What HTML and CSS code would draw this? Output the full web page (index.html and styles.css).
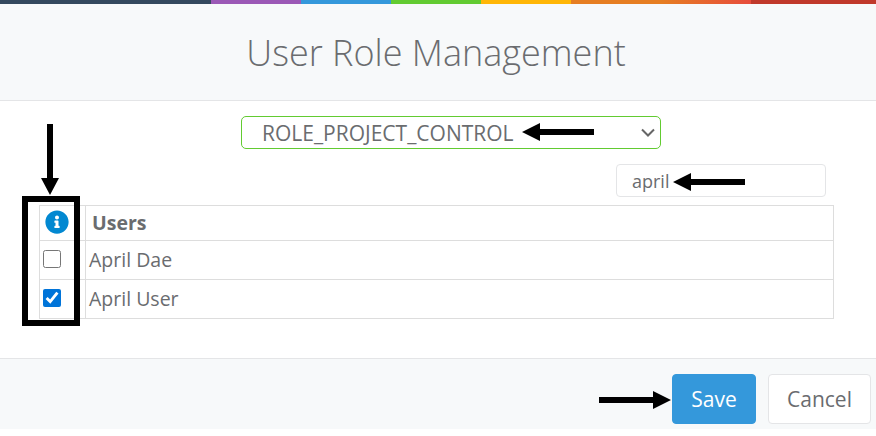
FILE: index.html
```html
<!DOCTYPE html>
<html lang="en">
<head>
  <meta charset="UTF-8">
  <meta name="viewport" content="width=device-width, initial-scale=1.0">
  <title>User Role Management</title>
  <link rel="stylesheet" href="styles.css">
</head>
<body>
  <div class="color-line"></div>

  <header class="modal-header">
    <h1>User Role Management</h1>
  </header>

  <div class="modal-body">
    <div class="role-row">
      <select class="role-select">
        <option>ROLE_PROJECT_CONTROL</option>
      </select>
      <svg class="select-chevron" viewBox="0 0 14 10">
        <path d="M1 1.5l6 6 6-6"/>
      </svg>
    </div>

    <div class="search-row">
      <input class="search-input" type="text" value="april">
    </div>

    <table class="users-table">
      <thead>
        <tr>
          <th class="col-check">
            <svg class="info-icon" viewBox="0 0 512 512">
              <path d="M256 8C119.043 8 8 119.083 8 256c0 136.997 111.043 248 248 248s248-111.003 248-248C504 119.083 392.957 8 256 8zm0 110c23.196 0 42 18.804 42 42s-18.804 42-42 42-42-18.804-42-42 18.804-42 42-42zm56 254c0 6.627-5.373 12-12 12h-88c-6.627 0-12-5.373-12-12v-24c0-6.627 5.373-12 12-12h12v-64h-12c-6.627 0-12-5.373-12-12v-24c0-6.627 5.373-12 12-12h64c6.627 0 12 5.373 12 12v100h12c6.627 0 12 5.373 12 12v24z"/>
            </svg>
          </th>
          <th class="col-name">Users</th>
        </tr>
      </thead>
      <tbody>
        <tr class="row-first">
          <td class="col-check"><input type="checkbox"></td>
          <td>April Dae</td>
        </tr>
        <tr class="row-second">
          <td class="col-check"><input type="checkbox" checked></td>
          <td>April User</td>
        </tr>
      </tbody>
    </table>
  </div>

  <footer class="modal-footer">
    <button class="btn btn-save">Save</button>
    <button class="btn btn-cancel">Cancel</button>
  </footer>

  <!-- annotations drawn over the screenshot -->
  <div class="highlight-box"></div>
  <svg class="arrows" width="876" height="436" viewBox="0 0 876 436">
    <path d="M47 124h6v54h6l-9 17-9-17h6z"/>
    <path d="M522 132l18-9v6h54v6h-54v6z"/>
    <path d="M673 182l18-9v6h54v6h-54v6z"/>
    <path d="M671 400l-18 9v-6h-54v-6h54v-6z"/>
  </svg>
</body>
</html>
```

FILE: styles.css
```css
body {
  font-family: 'Open Sans', sans-serif;
  margin: 0;
  padding: 0;
  height: 436px;
  overflow: hidden;
  position: relative;
  background-color: white;
  color: #6a6c6f;
}
.color-line {
  height: 4px;
  background-image: linear-gradient(to right,
    #34495e 0, #34495e 211px,
    #9b59b6 211px, #9b59b6 301px,
    #3498db 301px, #3498db 391px,
    #62cb31 391px, #62cb31 481px,
    #ffb606 481px, #ffb606 571px,
    #e67e22 571px, #e67e22 661px,
    #e74c3c 751px, #c0392b 751px, #c0392b 100%);
}
.modal-header {
  background-color: #f7f9fa;
  border-bottom: 1px solid #e4e5e7;
  height: 97px;
  box-sizing: border-box;
  padding-right: 4px;
  display: flex;
  align-items: center;
  justify-content: center;
}
.modal-header h1 {
  margin: 0;
  font-size: 36px;
  font-weight: 300;
}
.modal-body {
  height: 257px;
  box-sizing: border-box;
  padding: 15px 42px 0 39px;
}
.role-row {
  position: relative;
  width: 420px;
  margin-left: 202px;
}
.role-select {
  display: block;
  width: 420px;
  height: 33px;
  padding: 0 20px;
  appearance: none;
  font-family: inherit;
  font-size: 21px;
  color: #6a6c6f;
  background-color: white;
  border: 1px solid #62cb31;
  border-radius: 5px;
}
.select-chevron {
  position: absolute;
  right: 6px;
  top: 12px;
  width: 14px;
  height: 10px;
  fill: none;
  stroke: #666;
  stroke-width: 2;
}
.search-row {
  display: flex;
  justify-content: flex-end;
  margin-top: 15px;
  margin-right: 8px;
}
.search-input {
  width: 210px;
  height: 33px;
  box-sizing: border-box;
  padding: 0 15px;
  font-family: inherit;
  font-size: 18px;
  color: #6a6c6f;
  border: 1px solid #e4e5e7;
  border-radius: 4px;
}
.users-table {
  width: 795px;
  margin-top: 8px;
  border-collapse: collapse;
  font-size: 19.5px;
}
.users-table th,
.users-table td {
  border: 1px solid #ddd;
  padding: 0 3px 2px;
  text-align: left;
}
.users-table thead tr {
  height: 35px;
}
.row-first {
  height: 39px;
}
.row-second {
  height: 39px;
}
.users-table .col-check {
  width: 42px;
  padding: 0 0 2px 3px;
}
.users-table .col-name {
  padding-left: 6px;
}
.col-check input {
  display: block;
  width: 18px;
  height: 18px;
  margin: 0;
  accent-color: #0074d9;
}
.info-icon {
  display: block;
  width: 24px;
  height: 24px;
  margin-left: 2px;
  fill: #0288d1;
}
.modal-footer {
  height: 71px;
  box-sizing: border-box;
  background-color: #f7f9fa;
  border-top: 1px solid #e4e5e7;
  display: flex;
  justify-content: flex-end;
  gap: 12px;
  padding: 15px 5px 0 0;
}
.btn {
  height: 50px;
  padding: 0 10px;
  border-radius: 4px;
  font-family: inherit;
  font-size: 21px;
  cursor: pointer;
}
.btn-save {
  width: 84px;
  background-color: #3498db;
  border: 1px solid #3498db;
  color: white;
}
.btn-cancel {
  width: 103px;
  background-color: white;
  border: 1px solid #e4e5e7;
  color: #6a6c6f;
}
.highlight-box {
  position: absolute;
  left: 22px;
  top: 196px;
  width: 58px;
  height: 130px;
  box-sizing: border-box;
  border: 6px solid black;
}
.arrows {
  position: absolute;
  left: 0;
  top: 0;
}
```
